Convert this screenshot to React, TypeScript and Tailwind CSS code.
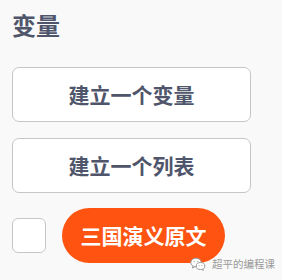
const font = "font-['Noto_Sans_CJK_SC',sans-serif]";

function WeChatIcon() {
  return (
    <svg width="16" height="14" viewBox="0 0 16 14" fill="none" stroke="#9a9a9a" strokeWidth="1">
      <ellipse cx="6" cy="5.5" rx="5.2" ry="4.3" fill="#fff" />
      <path d="M3 9 L2.4 11 L4.8 9.7" fill="#fff" />
      <ellipse cx="10.5" cy="9" rx="4.3" ry="3.5" fill="#fff" />
      <path d="M12.5 12 L13.4 13.4 L11.4 12.4" fill="#fff" />
      <circle cx="4.2" cy="4.6" r="0.6" fill="#9a9a9a" stroke="none" />
      <circle cx="7.8" cy="4.6" r="0.6" fill="#9a9a9a" stroke="none" />
      <circle cx="9.1" cy="8.5" r="0.5" fill="#9a9a9a" stroke="none" />
      <circle cx="11.9" cy="8.5" r="0.5" fill="#9a9a9a" stroke="none" />
    </svg>
  );
}

export default function App() {
  return (
    <div className={`relative h-[280px] w-[282px] overflow-hidden bg-[#f9f9f9] ${font}`}>
      <div className="flex flex-col px-3 pt-[10px]">
        <h2 className="text-[24px] font-bold leading-[30px] text-[#4f556b]">变量</h2>

        <button
          type="button"
          className="mt-[27px] flex h-[55px] w-[239px] items-center justify-center rounded-[7px] border border-[#c6c6c6] bg-white text-[21px] font-bold text-[#4f556b]"
        >
          建立一个变量
        </button>
        <button
          type="button"
          className="mt-[16px] flex h-[55px] w-[239px] items-center justify-center rounded-[7px] border border-[#c6c6c6] bg-white text-[21px] font-bold text-[#4f556b]"
        >
          建立一个列表
        </button>

        <div className="mt-[15px] flex items-center gap-[16px]">
          <div className="h-[35px] w-[34px] rounded-[6px] border border-[#c6c6c6] bg-white" />
          <div className="flex h-[55px] w-[163px] items-center justify-center rounded-full bg-[#ff5411] text-[21px] font-bold text-white">
            三国演义原文
          </div>
        </div>
      </div>

      {/* watermark */}
      <div className="absolute left-[190px] top-[257px] flex items-center gap-[6px] whitespace-nowrap">
        <WeChatIcon />
        <span className="text-[10.5px] leading-[14px] text-[#9a9a9a]">超平的编程课</span>
      </div>
    </div>
  );
}
